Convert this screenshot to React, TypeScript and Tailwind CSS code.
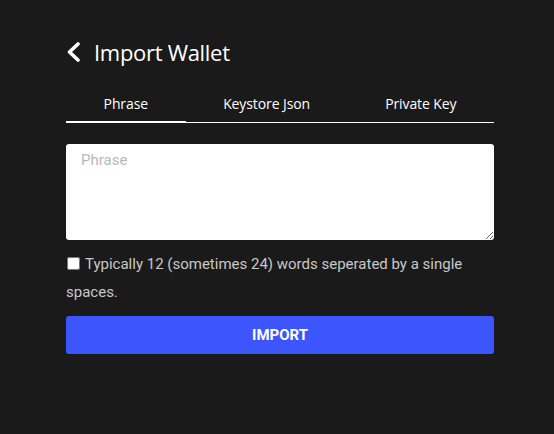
import React from "react";

export default function App() {
  const tabs = ["Phrase", "Keystore Json", "Private Key"];
  return (
    <div className="w-[554px] h-[434px] bg-[#1a1a1a] overflow-hidden">
      <div className="ml-[66px] w-[428px] pt-[38px]">
        <div className="flex items-center h-[28px]">
          <svg width="15" height="20" viewBox="0 0 15 20">
            <path d="M12 2 L3.5 10 L12 18" fill="none" stroke="#fff" strokeWidth="3.6" strokeLinecap="round" strokeLinejoin="round" />
          </svg>
          <span className="ml-[13px] text-white text-[22px] leading-[28px] font-['Open_Sans',sans-serif] tracking-[-0.3px]">
            Import Wallet
          </span>
        </div>
        <div className="mt-[21px] flex border-b border-white">
          {tabs.map((t, i) => (
            <div
              key={t}
              className={
                "flex-auto text-center text-white text-[14px] leading-[20px] pt-[7px] pb-[7px] font-['Open_Sans',sans-serif] tracking-[-0.1px] " +
                (i === 0 ? "border-b-2 border-white -mb-[1px]" : "pb-[8px]")
              }
            >
              {t}
            </div>
          ))}
        </div>
        <textarea
          placeholder="Phrase"
          className="mt-[21px] block w-full h-[96px] bg-white rounded-[3px] px-[15px] py-[6px] text-[15px] leading-[20px] font-['Roboto',sans-serif] text-black placeholder:text-[#b8b8b8] outline-none"
        />
        <div className="mt-[10px] text-[15px] leading-[28px] text-[#c8c8c8] font-['Roboto',sans-serif]">
          <input type="checkbox" className="w-[13px] h-[13px] align-[-1px] mr-[5px] ml-[1px]" />
          Typically 12 (sometimes 24) words seperated by a single spaces.
        </div>
        <button className="mt-[10px] w-full h-[38px] bg-[#3d55fd] rounded-[3px] text-white font-bold text-[15px] font-['Roboto',sans-serif]">
          IMPORT
        </button>
      </div>
    </div>
  );
}
